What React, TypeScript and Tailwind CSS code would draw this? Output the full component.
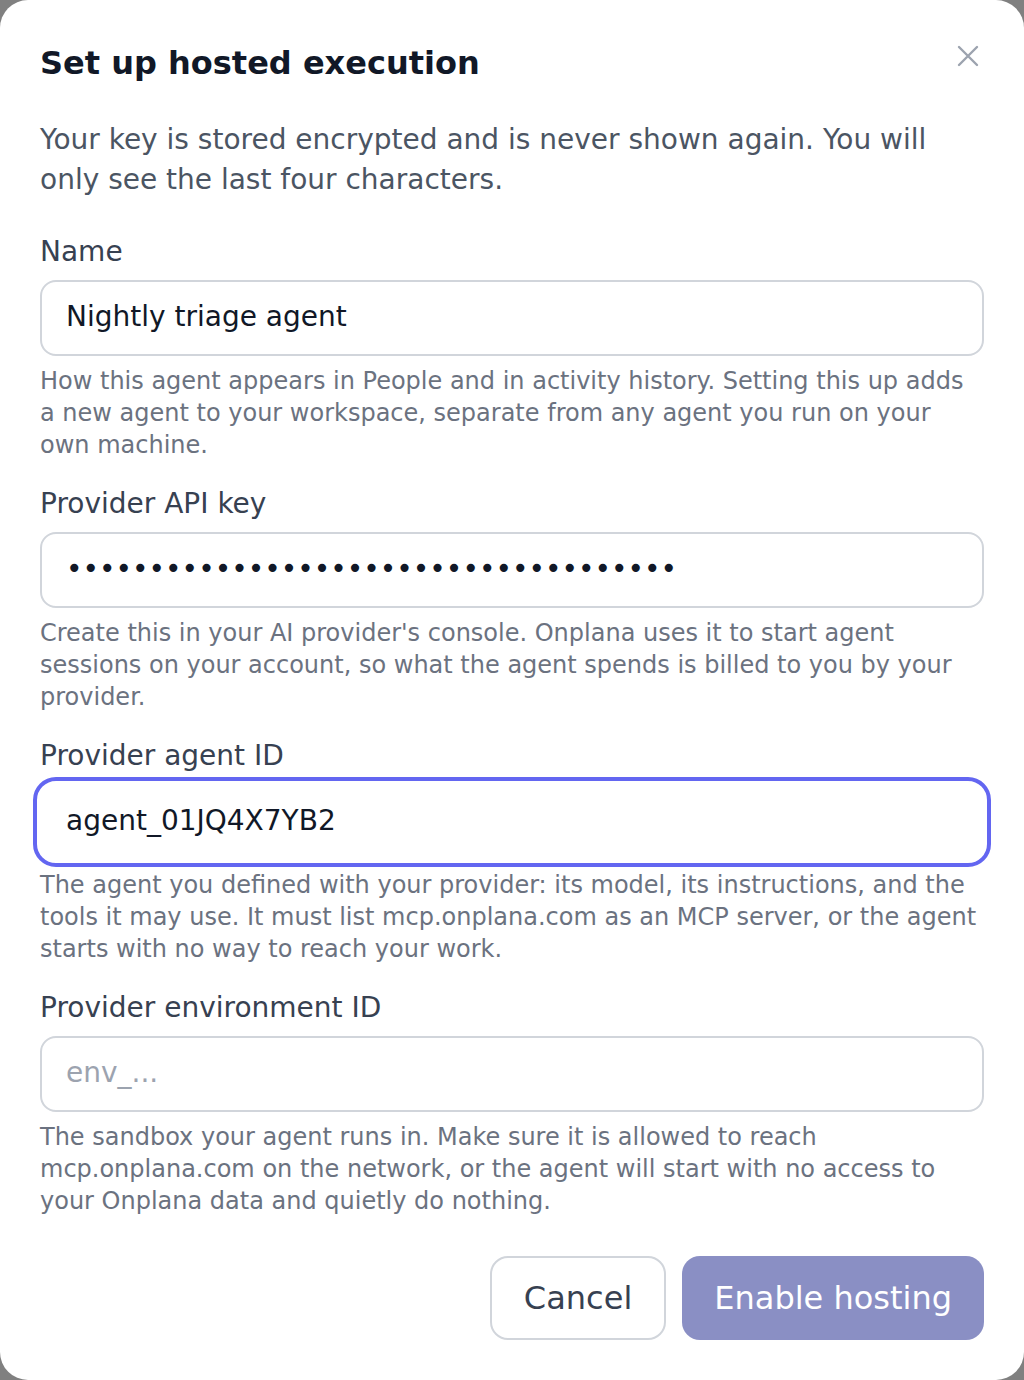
import { useState } from "react";

interface FieldProps {
  label: string;
  help: string;
  value?: string;
  placeholder?: string;
  type?: string;
  focused?: boolean;
}

const Field = ({ label, help, value, placeholder, type = "text", focused = false }: FieldProps) => {
  const [text, setText] = useState(value ?? "");

  return (
    <div className="flex flex-col">
      <label className="text-[28px] leading-10 text-[#374151]">{label}</label>
      <input
        type={type}
        value={text}
        placeholder={placeholder}
        onChange={(e) => setText(e.target.value)}
        className={`mt-2 h-[76px] w-full rounded-2xl border-2 px-6 pb-1 text-[28px] text-[#111827] placeholder:text-[#9ca3af] focus:outline-none ${
          focused
            ? "border-transparent outline-4 outline-offset-[3px] outline-[#6366f1] focus:outline-4"
            : "border-[#d1d5db]"
        }`}
      />
      <p className="mt-[9px] text-[24px] leading-8 text-[#6b7280]">{help}</p>
    </div>
  );
};

const App = () => {
  return (
    <div className="min-h-[1380px] bg-[#808080]" style={{ fontFamily: '"DejaVu Sans", "Noto Sans", sans-serif' }}>
      <div className="relative min-h-[1380px] rounded-[28px] bg-white px-10 pb-10 pt-[43px]">
        <button className="absolute right-[44px] top-[44px] text-[#9ca3af]" aria-label="Close">
          <svg width="24" height="24" viewBox="0 0 24 24" fill="none" stroke="currentColor" strokeWidth="2.4" strokeLinecap="round">
            <path d="M3 3L21 21M21 3L3 21" />
          </svg>
        </button>

        <h2 className="text-[32px] font-bold leading-10 text-[#111827]">Set up hosted execution</h2>
        <p className="mt-[37px] text-[28px] leading-10 text-[#4b5563]">
          Your key is stored encrypted and is never shown again. You will only see the last four characters.
        </p>

        <div className="mt-8 flex flex-col gap-[23px]">
          <Field
            label="Name"
            value="Nightly triage agent"
            help="How this agent appears in People and in activity history. Setting this up adds a new agent to your workspace, separate from any agent you run on your own machine."
          />
          <Field
            label="Provider API key"
            type="password"
            value="sk-ant-api03-abcdefghijklmnopqrstuvwx"
            help="Create this in your AI provider's console. Onplana uses it to start agent sessions on your account, so what the agent spends is billed to you by your provider."
          />
          <Field
            label="Provider agent ID"
            value="agent_01JQ4X7YB2"
            focused
            help="The agent you defined with your provider: its model, its instructions, and the tools it may use. It must list mcp.onplana.com as an MCP server, or the agent starts with no way to reach your work."
          />
          <Field
            label="Provider environment ID"
            placeholder="env_..."
            help="The sandbox your agent runs in. Make sure it is allowed to reach mcp.onplana.com on the network, or the agent will start with no access to your Onplana data and quietly do nothing."
          />
        </div>

        <div className="mt-[39px] flex justify-end gap-4">
          <button className="h-[84px] rounded-[18px] border-2 border-[#d1d5db] bg-white px-8 text-[32px] text-[#374151]">
            Cancel
          </button>
          <button className="h-[84px] rounded-[18px] border-2 border-transparent bg-[#8a8fc4] px-[30px] text-[32px] text-white">
            Enable hosting
          </button>
        </div>
      </div>
    </div>
  );
};

export default App;
